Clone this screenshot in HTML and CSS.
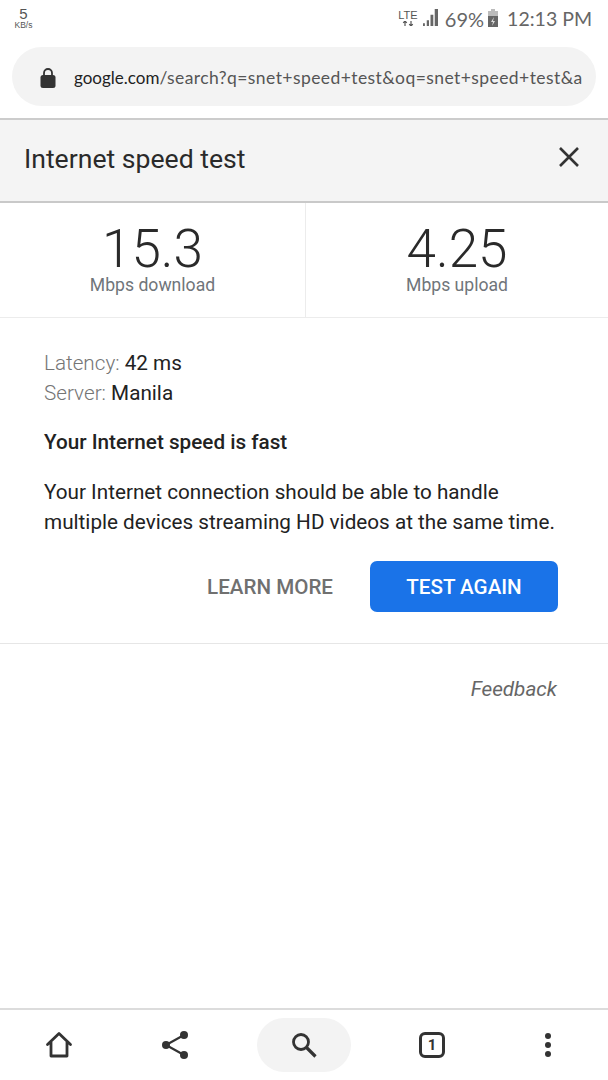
FILE: index.html
```html
<!DOCTYPE html>
<html lang="en">
<head>
<meta charset="utf-8">
<title>Internet speed test</title>
<link rel="stylesheet" href="styles.css">
</head>
<body>
<div class="page">
  <div class="status">
    <div class="net"><span class="net-num">5</span><span class="net-unit">KB/s</span></div>
    <div class="status-right">
      <span class="lte">LTE<svg class="lte-arrows" width="12" height="5" viewBox="0 0 12 5"><path d="M3 0v5M1.2 1.8 3 0l1.8 1.8M9 5V0M7.2 3.2 9 5l1.8-1.8" fill="none" stroke="#555" stroke-width="1.2"/></svg></span>
      <svg class="signal" width="15" height="17" viewBox="0 0 16 18"><path d="M0 15h2v3H0zM4 12h2.400v6H4zM8 6h3v12H8zM12.500 0H16v18h-3.500z" fill="#666"/></svg>
      <span class="pct">69%</span>
      <svg class="battery" width="10" height="18" viewBox="0 0 10 18"><path d="M3 0h4v2h3v16H0V2h3z" fill="#bbb"/><path d="M0 7h10v11H0z" fill="#666"/><path d="M6 8 3 13h2l-1 4 3-5H5z" fill="#ddd"/></svg>
      <span class="time">12:13 PM</span>
    </div>
  </div>
  <div class="toolbar">
    <div class="urlbar">
      <svg class="lock" width="16" height="20" viewBox="0 0 16 20"><path d="M4 8V5a4 4 0 0 1 8 0v3" fill="none" stroke="#333" stroke-width="1.800"/><rect x="0.500" y="7" width="15" height="13" rx="2.500" fill="#333"/></svg>
      <span class="url"><b class="host">google.com</b>/search?q=snet+speed+test&amp;oq=snet+speed+test&amp;a</span>
    </div>
  </div>
  <header class="head">
    <h1 class="title">Internet speed test</h1>
    <svg class="close" width="22" height="22" viewBox="0 0 22 22"><path d="M2 2l18 18M20 2 2 20" stroke="#333" stroke-width="2.600" fill="none"/></svg>
  </header>
  <section class="stats">
    <div class="stat stat-first"><div class="val">15.3</div><div class="lab">Mbps download</div></div>
    <div class="stat"><div class="val">4.25</div><div class="lab">Mbps upload</div></div>
  </section>
  <section class="body">
    <div class="meta"><span class="k">Latency:</span> 42 ms</div>
    <div class="meta"><span class="k">Server:</span> Manila</div>
    <p class="verdict">Your Internet speed is fast</p>
    <p class="desc">Your Internet connection should be able to handle multiple devices streaming HD videos at the same time.</p>
    <div class="actions">
      <span class="learn">LEARN MORE</span>
      <span class="again">TEST AGAIN</span>
    </div>
  </section>
  <div class="feedback">Feedback</div>
  <nav class="bottom">
    <svg class="ic" width="28" height="28" viewBox="0 0 28 28"><path d="M2.500 13.500 14 2.500l11.500 11M6 11v14h16V11" fill="none" stroke="#333" stroke-width="2.800" stroke-linejoin="round" stroke-linecap="round"/></svg>
    <svg class="ic" width="30" height="30" viewBox="0 0 30 30"><path d="M24 5 6 15l18 10" fill="none" stroke="#333" stroke-width="2.200"/><circle cx="24" cy="5" r="4" fill="#333"/><circle cx="6" cy="15" r="4" fill="#333"/><circle cx="24" cy="25" r="4" fill="#333"/></svg>
    <div class="search"><svg width="28" height="28" viewBox="0 0 28 28"><circle cx="11" cy="11" r="7.500" fill="none" stroke="#333" stroke-width="2.800"/><path d="m16.500 16.500 9 9" stroke="#333" stroke-width="3.200"/></svg></div>
    <div class="tabs">1</div>
    <svg class="ic" width="8" height="26" viewBox="0 0 8 26"><circle cx="4" cy="4" r="3" fill="#333"/><circle cx="4" cy="13" r="3" fill="#333"/><circle cx="4" cy="22" r="3" fill="#333"/></svg>
  </nav>
</div>
</body>
</html>
```
FILE: styles.css
```css
* { box-sizing: border-box; }
html, body { margin: 0; padding: 0; background: #fff; }
.page {
  width: 608px; height: 1080px; overflow: hidden;
  display: flex; flex-direction: column;
  font-family: Roboto, "Liberation Sans", sans-serif; color: #222;
}
.status { height: 47px; flex: none; display: flex; justify-content: space-between; padding: 6px 16px 0 12px; }
.net { display: flex; flex-direction: column; align-items: center; width: 23px; color: #555; }
.net-num { font: 500 15px/15px "Liberation Sans", sans-serif; }
.net-unit { font: 400 8.500px/9px "Liberation Sans", sans-serif; }
.status-right { display: flex; align-items: flex-start; height: 24px; color: #666; }
.lte { display: flex; flex-direction: column; align-items: center; width: 20px; font: 500 11px/10px "Liberation Sans", sans-serif; color: #555; margin: 4px 5px 0 0; }
.lte-arrows { display: block; margin-top: 1px; }
.signal { margin: 3px 7px 0 0; }
.pct { font: 400 20px/28px Lato, sans-serif; margin: -1px 4px 0 0; }
.battery { margin: 3px 9px 0 0; }
.time { font: 400 19.500px/28px Lato, sans-serif; margin-top: -1px; }
.toolbar { height: 73px; flex: none; padding: 0 12px; border-bottom: 2px solid #ccc; }
.urlbar {
  width: 584px; height: 59px; border-radius: 30px; background: #f3f3f3;
  display: flex; align-items: center; padding: 2px 14px 0 28px; overflow: hidden;
}
.lock { flex: none; margin-right: 18px; }
.url { font: 400 17.500px/24px Lato, sans-serif; color: #555; white-space: nowrap; letter-spacing: .42px; }
.host { color: #222; font-weight: 400; font-size: 17px; letter-spacing: 0; }
.head {
  height: 83px; flex: none; background: #f4f4f4; border-bottom: 2px solid #c9c9c9;
  display: flex; justify-content: space-between; align-items: flex-start; padding: 22px 28px 0 24px;
}
.title { margin: 0; font: 400 26.600px/34px Roboto, sans-serif; color: #2a2a2a; }
.close { margin: 4px 0 0; }
.stats { height: 115px; flex: none; display: flex; border-bottom: 1px solid #ececec; }
.stat { flex: 1; display: flex; flex-direction: column; align-items: center; padding-top: 20px; }
.stat-first { flex: none; width: 306px; border-right: 1px solid #ececec; }
.val { font: 300 53px/52px Roboto, sans-serif; color: #2a2a2a; }
.lab { font: 400 17.600px/20px Roboto, sans-serif; color: #70757a; }
.body { flex: none; height: 326px; padding: 30px 50px 0 44px; border-bottom: 1px solid #e6e6e6; }
.meta { font: 400 20.700px/30px Roboto, sans-serif; color: #222; }
.k { color: #757575; font-weight: 300; }
.verdict { margin: 20px 0 0; font: 500 20.700px/28px Roboto, sans-serif; color: #222; }
.desc { margin: 21px 0 0; font: 400 20.700px/30px Roboto, sans-serif; color: #222; }
.actions { display: flex; justify-content: flex-end; align-items: center; gap: 37px; margin-top: 24px; }
.learn { font: 500 20.600px/24px Roboto, sans-serif; color: #707070; }
.again {
  width: 188px; height: 51px; border-radius: 7px; background: #1a73e8; color: #fff;
  display: flex; align-items: center; justify-content: center;
  font: 500 20.600px/24px Roboto, sans-serif;
}
.feedback { flex: none; padding: 32px 51px 0 0; text-align: right; font: italic 400 20.700px/26px Roboto, sans-serif; color: #666; }
.bottom {
  margin-top: auto; height: 72px; flex: none; background: #fff;
  border-top: 2px solid #dcdcdc; display: grid;
  grid-template-columns: 118px 114px 144px 112px 1fr;
  align-items: center; justify-items: center;
}
.search { width: 94px; height: 54px; border-radius: 27px; background: #f3f3f3; display: flex; align-items: center; justify-content: center; }
.tabs {
  width: 26px; height: 26px; border: 3px solid #333; border-radius: 6px;
  display: flex; align-items: center; justify-content: center;
  font: 700 15px/1 Roboto, sans-serif; color: #333;
}
```
